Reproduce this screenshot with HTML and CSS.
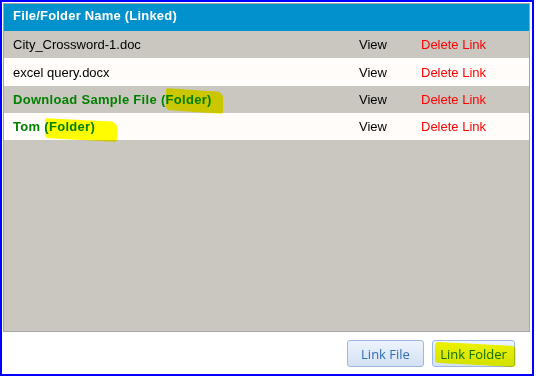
FILE: index.html
```html
<!DOCTYPE html>
<html lang="en">
<head>
  <meta charset="UTF-8">
  <title>Linked Files</title>
  <link rel="stylesheet" href="styles.css">
</head>
<body>
  <div class="frame">
    <div class="panel">
      <div class="head">File/Folder Name (Linked)</div>
      <div class="row alt">
        <span class="name">City_Crossword-1.doc</span>
        <span class="view">View</span>
        <span class="del">Delete Link</span>
      </div>
      <div class="row">
        <span class="name">excel query.docx</span>
        <span class="view">View</span>
        <span class="del">Delete Link</span>
      </div>
      <div class="row alt">
        <span class="name folder">Download Sample File (<span class="mark m1">Folder)</span></span>
        <span class="view">View</span>
        <span class="del">Delete Link</span>
      </div>
      <div class="row">
        <span class="name folder">Tom <span class="mark m2">(Folder)</span></span>
        <span class="view">View</span>
        <span class="del">Delete Link</span>
      </div>
    </div>
    <div class="actions">
      <button class="btn file">Link File</button>
      <button class="btn hl">Link Folder</button>
    </div>
  </div>
</body>
</html>
```

FILE: styles.css
```css
* {margin: 0; padding: 0; box-sizing: border-box;}
body {background: #fff; font-family: "Liberation Sans", Arial, sans-serif; font-size: 13px;}

.frame {width: 534px; height: 376px; border: 2px solid #0000ff; padding: 1px; display: flex; flex-direction: column;}
.panel {height: 329px; margin-right: 1px; background: #cac7c0; border: 1px solid #a5a5a5;}

.head {height: 27px; background: #0191cd; color: #fff; font-weight: bold; letter-spacing: 0.2px; padding: 4px 0 0 9px;}

.row {display: grid; grid-template-columns: 346px 62px 1fr; height: 27px; align-items: center; padding-left: 9px; background: #fffcfa; color: #000;}
.row.alt {background: #cac7c0;}
.row:nth-child(3) {height: 28px;}
.del {color: #ff0000;}
.folder {color: #008000; font-weight: bold; letter-spacing: 0.3px;}

.mark {position: relative;}
.mark::after {content: ""; position: absolute; background: #ffff00; mix-blend-mode: multiply; border-radius: 2px 6px 3px 4px;}
.m1::after {left: 0; right: -11px; top: -2px; bottom: -5px; transform: skewY(4deg);}
.m2::after {left: 1px; right: -22px; top: 1px; bottom: -6px; transform: skewY(3deg);}

.actions {display: flex; justify-content: flex-end; gap: 8px; padding: 8px 16px 0 0;}
.btn {height: 27px; border: 1px solid #9db9df; border-radius: 3px; background: linear-gradient(#edf3fc, #d3e1f4); color: #2f6db5; font-family: "Open Sans", "Noto Sans", sans-serif; font-size: 13px;}
.btn.file {width: 77px;}
.btn.hl {width: 83px; position: relative; color: #107010;}
.btn.hl::after {content: ""; position: absolute; left: 2px; right: -2px; top: 3px; bottom: 1px; background: #ffff00; mix-blend-mode: multiply; transform: skewY(3deg); border-radius: 4px;}
```
